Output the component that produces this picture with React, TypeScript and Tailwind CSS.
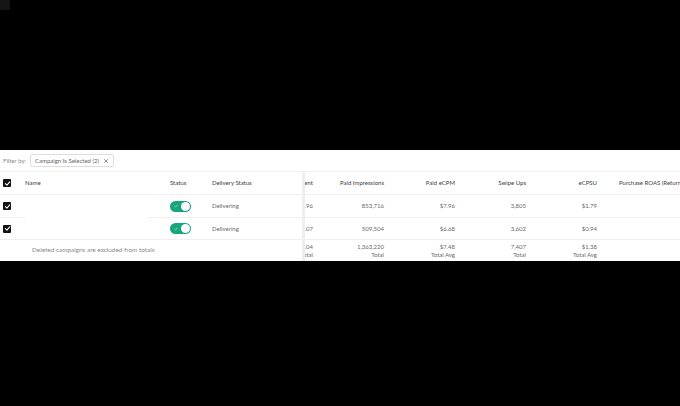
import { X } from "lucide-react";

interface Row {
  spend: string;
  impressions: string;
  ecpm: string;
  swipeUps: string;
  ecpsu: string;
}

const rows: Row[] = [
  { spend: "$6,797.96", impressions: "853,716", ecpm: "$7.96", swipeUps: "3,805", ecpsu: "$1.79" },
  { spend: "$3,401.07", impressions: "509,504", ecpm: "$6.68", swipeUps: "3,602", ecpsu: "$0.94" },
];

const totals = [
  { value: "$10,199.04", label: "Total" },
  { value: "1,363,220", label: "Total" },
  { value: "$7.48", label: "Total Avg" },
  { value: "7,407", label: "Total" },
  { value: "$1.38", label: "Total Avg" },
];

const metricHeaders = ["Amount Spent", "Paid Impressions", "Paid eCPM", "Swipe Ups", "eCPSU"];

function Checkbox() {
  return (
    <div className="w-[8px] h-[8px] rounded-[1px] bg-[#111] flex items-center justify-center">
      <svg viewBox="0 0 10 10" className="w-[7px] h-[7px]">
        <path d="M2 5.2 L4.2 7.3 L8.2 2.6" fill="none" stroke="#fff" strokeWidth="1.5" strokeLinecap="round" strokeLinejoin="round" />
      </svg>
    </div>
  );
}

function Toggle() {
  return (
    <div className="w-[21px] h-[11px] rounded-full bg-[#17a57e] flex items-center justify-between pl-[4px] pr-[1px]">
      <svg viewBox="0 0 10 10" className="w-[4px] h-[4px]">
        <path d="M1.5 5.2 L4 7.5 L8.5 2.5" fill="none" stroke="#bfe8da" strokeWidth="1.6" strokeLinecap="round" strokeLinejoin="round" />
      </svg>
      <div className="w-[9px] h-[9px] rounded-full bg-white" />
    </div>
  );
}

export default function App() {
  const cell = "border-b border-[#efefef] flex items-center";
  const metricCell = "w-[71px] shrink-0 pr-[8px] flex items-center justify-end whitespace-nowrap";
  return (
    <div className="w-[680px] h-[406px] bg-black font-['Lato',sans-serif] text-[6px] leading-none">
      <div className="w-[10px] h-[10px] bg-[#151515]" />
      <div className="mt-[140px] h-[111px] bg-white overflow-hidden">
        {/* filter bar */}
        <div className="h-[22px] flex items-center gap-[4px] pl-[3px] border-b border-[#efefef]">
          <span className="text-[#8a8a8a]">Filter by:</span>
          <div className="h-[13px] flex items-center gap-[4px] px-[4px] border border-[#dedede] rounded-[2px] text-[#666]">
            <span>Campaign Is Selected (2)</span>
            <X className="w-[6px] h-[6px] text-[#555]" strokeWidth={2.5} />
          </div>
        </div>

        <div className="flex">
          {/* sticky left columns */}
          <div className="w-[305px] shrink-0 border-r-[3px] border-[#eeeeee]">
            <div className="h-[23px] flex text-[#3d3d3d]">
              <div className={`${cell} w-[25px] pl-[3px]`}><Checkbox /></div>
              <div className={`${cell} w-[145px]`}>Name</div>
              <div className={`${cell} w-[42px]`}>Status</div>
              <div className={`${cell} flex-1`}>Delivery Status</div>
            </div>
            {[0, 1].map((i) => (
              <div key={i} className={`flex text-[#6a6a6a] ${i === 0 ? "h-[23px]" : "h-[22px]"}`}>
                <div className={`${cell} w-[25px] pl-[3px]`}><Checkbox /></div>
                <div className={`${cell} w-[123px] ${i === 0 ? "border-white" : ""}`} />
                <div className={`${cell} w-[22px]`} />
                <div className={`${cell} w-[42px]`}><Toggle /></div>
                <div className={`${cell} flex-1`}>Delivering</div>
              </div>
            ))}
            <div className="h-[21px] flex items-center pl-[32px] text-[6.4px] text-[#8a8a8a]">
              Deleted campaigns are excluded from totals
            </div>
          </div>

          {/* scrolled metrics */}
          <div className="flex-1 overflow-hidden">
            <div className="ml-[-55px] w-[500px]">
              <div className="h-[23px] flex text-[#3d3d3d] border-b border-[#efefef]">
                {metricHeaders.map((h) => (
                  <div key={h} className={metricCell}>{h}</div>
                ))}
                <div className="pl-[14px] flex items-center whitespace-nowrap">Purchase ROAS (Return on Ad Spend)</div>
              </div>
              {rows.map((r, i) => (
                <div key={i} className={`flex text-[#6a6a6a] border-b border-[#efefef] ${i === 0 ? "h-[23px]" : "h-[22px]"}`}>
                  {[r.spend, r.impressions, r.ecpm, r.swipeUps, r.ecpsu].map((v, j) => (
                    <div key={j} className={metricCell}>{v}</div>
                  ))}
                </div>
              ))}
              <div className="h-[21px] flex text-[#6a6a6a]">
                {totals.map((t, j) => (
                  <div key={j} className="w-[71px] shrink-0 pr-[8px] flex flex-col items-end justify-center gap-[2px] whitespace-nowrap">
                    <span>{t.value}</span>
                    <span>{t.label}</span>
                  </div>
                ))}
              </div>
            </div>
          </div>
        </div>
      </div>
    </div>
  );
}
